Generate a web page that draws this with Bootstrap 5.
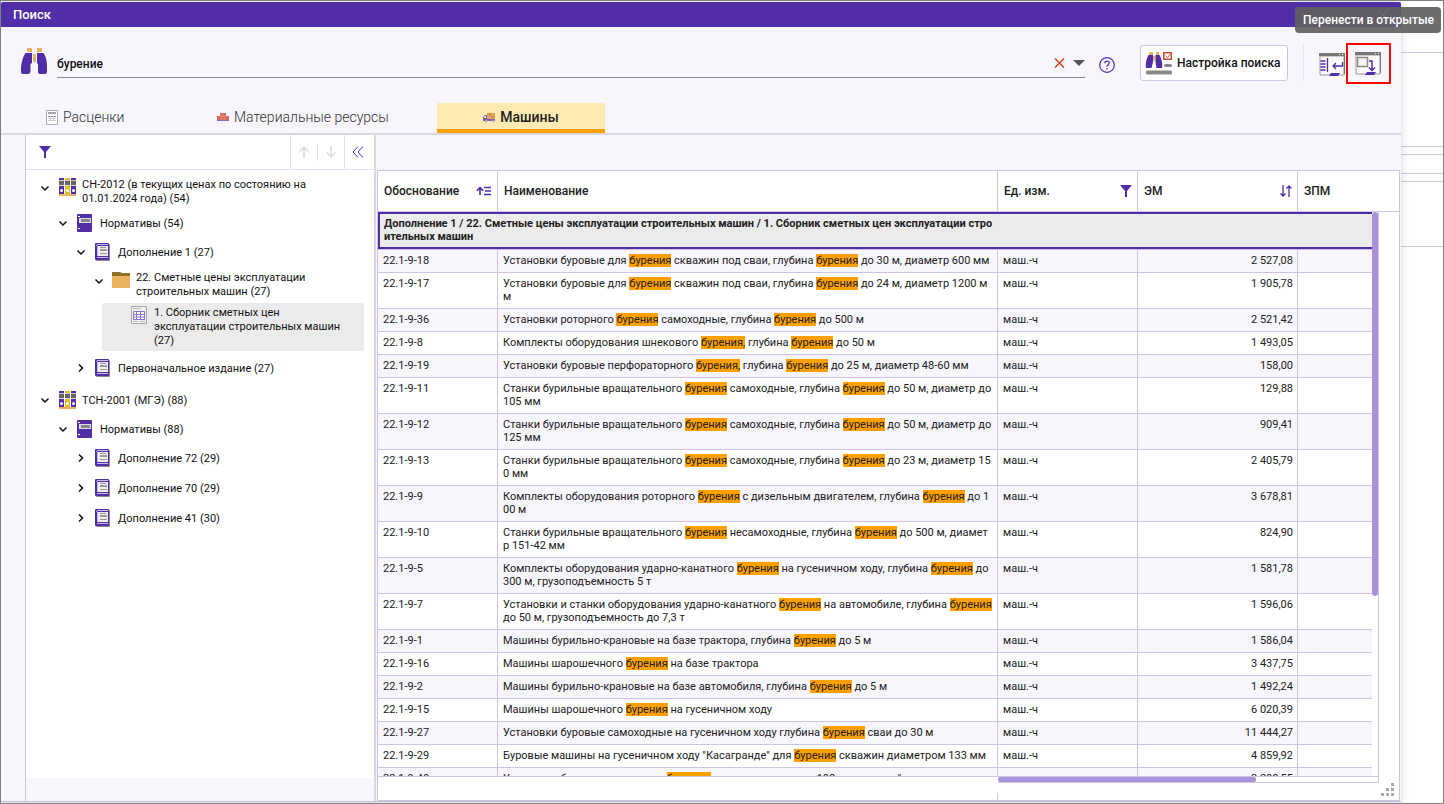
<!DOCTYPE html>
<html lang="ru">
<head>
<meta charset="utf-8">
<meta name="viewport" content="width=device-width, initial-scale=1">
<title>Поиск</title>
<link href="https://cdn.jsdelivr.net/npm/bootstrap@5.3.0/dist/css/bootstrap.min.css" rel="stylesheet">
<style>
:root{--violet:#512da8;--line:#cfc3e8;--tint:#f8f6fd;--mid:#a893d6;--orange:#ffa000}
body{font-family:Roboto,"Liberation Sans",sans-serif;font-size:11px;line-height:13px;color:#212121;background:#fff}
svg{display:block;flex:none}
button{line-height:1}
.screen{height:100vh;border:1px solid #808080;overflow:hidden}
.dialog-win{background:var(--tint);margin-top:1px;margin-bottom:1px;border-bottom:1px solid #c4bfce;border-radius:2px 2px 0 0;box-shadow:0 0 8px rgba(0,0,0,.18);z-index:1;min-width:0}
.title-bar{height:25px;background:var(--violet);color:#fff;padding:0 12px;border-radius:2px 2px 0 0}
.title-bar h1{font-size:13px;line-height:16px;font-weight:500}
.search-bar{height:76px;padding:10px 10px 0 20px}
.search-box{height:33px;border-bottom:1px solid #8e8b98}
.search-box input{font-size:12px;font-weight:500;line-height:16px;color:#111;background:none;outline:0;padding:2px 0 0}
.plain-btn{background:none;border:0;padding:0}
.setup-btn{height:36px;width:148px;background:#fff;border:1px solid var(--line);border-radius:3px;font-size:12px;font-weight:500;color:#111;padding:0 4px;margin-left:25px}
.help-btn{margin-left:14px}
.vr-line{width:1px;background:#e6e0f3}
.tall-line{height:36px;margin:8px 15px 0}
.hot{border:2px solid #f00;width:45px;height:41px;margin-top:6px}
.tab-row{border-bottom:2px solid #dad6e0;height:32px}
.tab-item{height:30px;font-size:14px;line-height:18px;font-weight:300;color:#333;border-bottom:4px solid transparent;padding-top:2px}
.tab-item.active{background:#ffebb2;border-bottom-color:var(--orange);font-weight:500;color:#212121;width:168px}
.tab-a{width:200px;padding-left:45px}
.tab-b{width:236px;padding-left:16px}
.shrinkable{min-height:0;min-width:0}
.side{width:349px;margin-left:24px;border-left:1px solid var(--line)}
.side-tools{height:35px;border-bottom:1px solid #e6e0f3;background:#fff;padding-left:13px}
.side-foot{height:23px}
.splitter{width:2px;background:#dad8e0;margin-right:1px}
.tree{font-size:11px;line-height:14px;color:#111;list-style:none;margin:0;padding:0;background:#fff}
.tree li{display:flex;align-items:center;gap:6px;padding-left:14px;height:29px}
.tree li>svg{margin-bottom:2px}
.tree .chev{margin-right:2px}
.tree .tall{height:30px}
.tree .two{height:39px;align-items:flex-start;padding-top:8px}
.tree .two-b{height:34px;align-items:flex-start;padding-top:4px}
.tree .two .chev,.tree .two-b .chev{margin-top:5px}
.tree .gap-top{margin-top:2px}
.tree .l2{padding-left:32px}
.tree .l3{padding-left:50px}
.tree .l4{padding-left:68px}
.tree .picked{height:48px;align-items:flex-start;margin:2px 10px 3px 76px;padding:3px 0 0 28px;background:#ebebeb;border-radius:2px}
.work{padding-top:35px;margin-right:1px}
.grid-pane{border:1px solid var(--line);background:#fff;min-width:0}
.grid-table{table-layout:fixed;width:100%;border-collapse:separate;border-spacing:0}
.c1{width:120px}.c2{width:500px}.c3{width:140px}.c4{width:160px}
.grid-table th{height:41px;font-size:12px;line-height:14px;font-weight:500;padding:0 5px 0 6px;border-right:1px solid var(--line);border-bottom:1px solid var(--line);vertical-align:middle}
.grid-table th:last-child{border-right:0}
.grid-table td{white-space:nowrap;padding:4px 5px 5px;vertical-align:top;border-right:1px solid var(--line);border-bottom:1px solid var(--line)}
.grid-table td:last-child{border-right:0}
.grid-table td:nth-child(4){text-align:right;padding-right:4px}
.grid-table tr:nth-child(even) td{background:var(--tint)}
.grid-table .group-row td{height:38px;padding:0;border-right:0;background:#fff}
.group-box{height:37px;background:#ebebeb;border:2px solid var(--violet);border-right:0;padding:3px 4px;font-weight:700}
.hit{background:var(--orange);color:inherit;padding:0}
.v-track{width:7px;border-right:1px solid var(--line)}
.v-thumb{height:68%;background:var(--mid);border-radius:3px}
.pad-right{width:20px}
.h-row{height:24px}
.h-left{width:620px;border-top:1px solid var(--line)}
.h-track{height:7px;border:1px solid var(--line);border-left:0;margin-right:20px}
.h-thumb{width:68%;height:5px;background:var(--mid);border-radius:2px}
.h-tick{width:1px;height:7px;background:var(--line);margin-left:-1px}
.behind{width:42px}
.behind div{border-bottom:1px solid var(--line)}
.tip{position:absolute;right:2px;top:6px;background:rgba(97,97,97,.92);color:#fff;font-size:12px;font-weight:500;line-height:16px;padding:5px 7px 5px 8px;border-radius:4px;z-index:3}
.grip{position:absolute;right:48px;bottom:7px;z-index:2}
</style>
</head>
<body>
<svg width="0" height="0" class="position-absolute" aria-hidden="true">
<defs>
<symbol id="down" viewBox="0 0 10 10"><path d="M1.500 3.500 5 7l3.500-3.500" fill="none" stroke="#111" stroke-width="1.500"/></symbol>
<symbol id="right" viewBox="0 0 10 10"><path d="M3 1.500 6.500 5 3 8.500" fill="none" stroke="#111" stroke-width="1.500"/></symbol>
<symbol id="funnel" viewBox="0 0 12 12"><path d="M0 0h12L7 6v6H5V6z" fill="#512da8"/></symbol>
<symbol id="binders" viewBox="0 0 18 18"><path d="M1 0h5v16H1zM13 0h5v16h-5z" fill="#512da8"/><path d="M7 0h5v16H7z" fill="#e8bd1c"/><path d="M1 3h5v4H1zM7 3h5v4H7zM13 3h5v4h-5z" fill="#666"/><path d="M1 2h5v1H1zM7 2h5v1H7zM13 2h5v1h-5z" fill="#ccc"/><path d="M1 7h5v1H1zM13 7h5v1h-5zM7 7h5v1H7z" fill="#ddd"/><g fill="#fff"><circle cx="3.500" cy="12.500" r="1.500"/><circle cx="9.500" cy="12.500" r="1.500"/><circle cx="15.500" cy="12.500" r="1.500"/></g><path d="M1 16h17v2H1z" fill="#e9b45f"/></symbol>
<symbol id="box" viewBox="0 0 18 18"><rect x="1" width="15" height="18" rx="1" fill="#512da8"/><path d="M3 4h12v5H3z" fill="#ddd"/><path d="M5 5h9v3H5z" fill="#888"/><path d="M2 2h2v1H2zM2 14h2v1H2z" fill="#fff"/></symbol>
<symbol id="book" viewBox="0 0 18 18"><rect x="2" y="1" width="14" height="17" rx="1" fill="#8b8794"/><rect x="1" width="14" height="17" rx="1" fill="#512da8"/><path d="M4 3h10v10H4z" fill="#eee"/><path d="M3 1h11v1H3zM2 2h1v1H2zM3 14h11v1H3zM3 3h1v10H3z" fill="#c9bce8"/><path d="M6 4h6v1H6zM6 6h7v2H6zM6 10h7v1H6z" fill="#999"/></symbol>
<symbol id="folder" viewBox="0 0 18 18"><path d="M0 1h8l2 1h8v3H0z" fill="#92702a"/><path d="M0 5h18v12H0z" fill="#e9b45f"/></symbol>
<symbol id="sheet" viewBox="0 0 18 18"><path d="M1.500.500h15v17h-15z" fill="#eee" stroke="#aaa"/><path d="M3 2h8v1H3zM4 15h4v1H4zM10 15h5v1h-5z" fill="#bbb"/><path d="M3.500 5.500h11v8h-11zM3.500 8.500h11M3.500 11h11M6.500 5.500v8M10.500 5.500v8" fill="#fff" stroke="#8a75c6"/></symbol>
</defs>
</svg>
<div class="screen position-relative d-flex">
<main class="dialog-win flex-grow-1 d-flex flex-column position-relative">
<header class="title-bar d-flex flex-shrink-0 align-items-center justify-content-between"><h1 class="m-0">Поиск</h1><button class="plain-btn" aria-label="Закрыть"><svg width="12" height="12" viewBox="0 0 12 12"><path d="M0 0l12 12M12 0 0 12" stroke="#fff"/></svg></button></header>
<form class="search-bar d-flex flex-shrink-0 align-items-start" onsubmit="return false">
<svg class="mt-2 me-2" width="28" height="30" viewBox="0 0 28 30"><path d="M6 3h5v4H6zM16 3h5v4h-5zM12 9h3v8h-3z" fill="#e9b45f"/><path d="M4.500 8H11V18L9.500 19V27L8 29H2Q0 29 0 27V22Q1 13 4.500 8zM16 8H22.500Q26 13 26 22V27Q26 29 24 29H18L17 27V19L16 18z" fill="#512da8"/></svg>
<div class="search-box flex-grow-1 d-flex align-items-center mt-2 pt-1">
<input class="border-0 flex-grow-1" type="text" value="бурение" aria-label="Поиск">
<button class="plain-btn me-2" aria-label="Очистить"><svg width="11" height="10" viewBox="0 0 11 10"><path d="M1 .5l9 9M10 .5l-9 9" stroke="#d1451f" stroke-width="1.500"/></svg></button>
<button class="plain-btn" aria-label="История"><svg width="12" height="6" viewBox="0 0 12 6"><path d="M0 0h12L6 6z" fill="#555"/></svg></button>
</div>
<button class="plain-btn help-btn mt-3 pt-1" aria-label="Справка"><svg width="16" height="16" viewBox="0 0 16 16"><circle cx="8" cy="8" r="7.300" fill="none" stroke="#512da8" stroke-width="1.200"/><path d="M5.800 6.300c0-3 4.500-2.900 4.500-.2C10.300 7.800 8 7.900 8 9.800M8 11v1.500" fill="none" stroke="#512da8" stroke-width="1.200"/></svg></button>
<button class="setup-btn d-flex flex-shrink-0 align-items-center gap-1 mt-2"><svg width="28" height="24" viewBox="0 0 28 24"><path d="M4 1h4v3H4zM11 1h3v3h-3zM8 5h2v5H8z" fill="#e9b45f"/><path d="M3.500 4H8v7L6.500 17H1Q0 10 3.500 4zM10.500 4H14.500Q18 10 17 17H11.500L10.500 11z" fill="#512da8"/><path d="M18.800 1.800h7.500v6.500h-7.500z" fill="#fff" stroke="#cf4a35" stroke-width="1.500"/><path d="M20.500 4.500l2 2 3-3.500" fill="none" stroke="#cf4a35"/><rect x="19" y="13" width="8" height="3" rx="1.500" fill="#888"/><rect x="1" y="19.500" width="26" height="4" rx="1.500" fill="#888"/></svg><span class="text-nowrap">Настройка поиска</span></button>
<span class="vr-line tall-line"></span>
<button class="plain-btn mt-3" aria-label="Вставить"><svg width="27" height="24" viewBox="0 0 27 24"><path d="M1 3h24v19H1z" fill="#fafafa" stroke="#999" stroke-width="1"/><path d="M0 0h26v3H0zM25 3h1v18h-1z" fill="#777"/><path d="M20 1h1v1h-1zM23 1h1v1h-1z" fill="#fff"/><path d="M1.500 8h5M1.500 11h5M1.500 14h5M1.500 17h5M8.500 5v14M23.500 9v4H14M17 10l-3 3 3 3" fill="none" stroke="#512da8" stroke-width="1.300"/><path d="M12 20h9l-2 3h-9z" fill="#512da8"/></svg></button>
<button class="plain-btn hot d-flex align-items-center justify-content-center" aria-label="Перенести в открытые"><svg width="27" height="24" viewBox="0 0 27 24"><path d="M1 3h24v19H1z" fill="#fafafa" stroke="#999" stroke-width="1"/><path d="M0 0h26v3H0zM25 3h1v18h-1z" fill="#777"/><path d="M20 1h1v1h-1zM23 1h1v1h-1z" fill="#fff"/><path d="M2.500 5.500h10v9h-10z" fill="#f4f4f4" stroke="#888" stroke-width="1.500"/><path d="M14 9h3v9M14 15.500l3 3 3-3" fill="none" stroke="#512da8" stroke-width="1.500"/><path d="M12 20h9l-2 3h-9z" fill="#512da8"/></svg></button>
</form>
<nav class="tab-row d-flex flex-shrink-0">
<a href="#" class="tab-item tab-a d-flex align-items-center text-decoration-none gap-1"><svg width="13" height="15" viewBox="0 0 13 15"><path d="M.5.500h11v14H.500z" fill="#fff" stroke="#aaa"/><path d="M2 2h8v2H2z" fill="#aaa"/><path d="M2 6.500h8" stroke="#8f7cc6"/><path d="M2 8.500h8M2 10.500h8M4.500 6v5M7.500 6v5" stroke="#ccc" fill="none"/></svg>Расценки</a>
<a href="#" class="tab-item tab-b d-flex align-items-center text-decoration-none gap-1"><svg width="13" height="8" viewBox="0 0 13 8"><path d="M3 0h6v3h3v4H0V3h3z" fill="#dc6a58"/><path d="M0 7h12v1H0z" fill="#8b6aae"/><path d="M3 3.500h6M6 0v3.500M4 3.500V7M8 3.500V7" stroke="#eba79b" stroke-width=".5"/></svg>Материальные ресурсы</a>
<a href="#" class="tab-item active d-flex align-items-center justify-content-center text-decoration-none gap-1"><svg width="13" height="11" viewBox="0 0 13 11"><path d="M4 1h8v7H4z" fill="#e3a35a"/><path d="M6 1h2v3H6zM9 4h2v2H9z" fill="#c98a52"/><path d="M0 9V5l2-2h2v4h8v2z" fill="#7c5cb5"/><path d="M1 5l1-1h1v2H1z" fill="#fff"/><circle cx="3" cy="9" r="1.300" fill="#aaa"/><circle cx="10" cy="9" r="1.300" fill="#aaa"/></svg>Машины</a>
</nav>
<div class="d-flex flex-grow-1 shrinkable">
<aside class="side d-flex flex-column flex-shrink-0">
<div class="side-tools d-flex align-items-center"><button class="plain-btn me-auto" aria-label="Фильтр"><svg width="12" height="12"><use href="#funnel"/></svg></button>
<span class="vr-line h-100"></span><button class="plain-btn px-2" disabled aria-label="Вверх"><svg width="10" height="12" viewBox="0 0 10 12"><path d="M5 12V1M.8 5.500 5 1.200l4.200 4.300" fill="none" stroke="#ddd" stroke-width="1.700"/></svg></button><span class="vr-line h-50"></span><button class="plain-btn px-2" disabled aria-label="Вниз"><svg width="10" height="12" viewBox="0 0 10 12"><path d="M5 0v11M.8 6.500 5 10.800l4.200-4.300" fill="none" stroke="#ddd" stroke-width="1.700"/></svg></button><span class="vr-line h-100"></span><button class="plain-btn px-2" aria-label="Свернуть"><svg width="13" height="12" viewBox="0 0 13 12"><path d="M5 .5 0 6l5 5.500M10 .5 5 6l5 5.500" fill="none" stroke="#512da8"/></svg></button></div>
<ul class="tree flex-grow-1">
<li class="two"><svg class="chev" width="10" height="10"><use href="#down"/></svg><svg width="18" height="18"><use href="#binders"/></svg><span>СН-2012 (в текущих ценах по состоянию на<br>01.01.2024 года) (54)</span></li>
<li class="l2"><svg class="chev" width="10" height="10"><use href="#down"/></svg><svg width="18" height="18"><use href="#box"/></svg>Нормативы (54)</li>
<li class="l3"><svg class="chev" width="10" height="10"><use href="#down"/></svg><svg width="18" height="18"><use href="#book"/></svg>Дополнение 1 (27)</li>
<li class="l4 two-b"><svg class="chev" width="10" height="10"><use href="#down"/></svg><svg width="18" height="18"><use href="#folder"/></svg><span>22. Сметные цены эксплуатации<br>строительных машин (27)</span></li>
<li class="picked"><svg width="18" height="18"><use href="#sheet"/></svg><span>1. Сборник сметных цен<br>эксплуатации строительных машин<br>(27)</span></li>
<li class="l3 tall"><svg class="chev" width="10" height="10"><use href="#right"/></svg><svg width="18" height="18"><use href="#book"/></svg>Первоначальное издание (27)</li>
<li class="gap-top"><svg class="chev" width="10" height="10"><use href="#down"/></svg><svg width="18" height="18"><use href="#binders"/></svg>ТСН-2001 (МГЭ) (88)</li>
<li class="l2"><svg class="chev" width="10" height="10"><use href="#down"/></svg><svg width="18" height="18"><use href="#box"/></svg>Нормативы (88)</li>
<li class="l3 tall"><svg class="chev" width="10" height="10"><use href="#right"/></svg><svg width="18" height="18"><use href="#book"/></svg>Дополнение 72 (29)</li>
<li class="l3 tall"><svg class="chev" width="10" height="10"><use href="#right"/></svg><svg width="18" height="18"><use href="#book"/></svg>Дополнение 70 (29)</li>
<li class="l3 tall"><svg class="chev" width="10" height="10"><use href="#right"/></svg><svg width="18" height="18"><use href="#book"/></svg>Дополнение 41 (30)</li>
</ul>
<div class="side-foot"></div>
</aside>
<div class="splitter flex-shrink-0"></div>
<section class="work flex-grow-1 d-flex flex-column shrinkable">
<div class="grid-pane flex-grow-1 d-flex flex-column shrinkable">
<table class="grid-table"><colgroup><col class="c1"><col class="c2"><col class="c3"><col class="c4"><col></colgroup>
<thead><tr><th><div class="d-flex justify-content-between align-items-center">Обоснование<svg width="16" height="10" viewBox="0 0 16 10"><path d="M4 9V1.500M.8 4.800 4 1.600l3.200 3.200M8 1.500h7M9 5h6M8 8.500h7" fill="none" stroke="#512da8" stroke-width="1.600"/></svg></div></th><th>Наименование</th><th><div class="d-flex justify-content-between align-items-center">Ед. изм.<svg width="12" height="12"><use href="#funnel"/></svg></div></th><th><div class="d-flex justify-content-between align-items-center">ЭМ<svg width="12" height="12" viewBox="0 0 12 12"><path d="M3 0v11M.5 8.500 3 11l2.500-2.500M9 12V1M6.500 3.500 9 1l2.500 2.500" fill="none" stroke="#512da8" stroke-width="1.300"/></svg></div></th><th>ЗПМ</th></tr></thead></table>
<div class="d-flex flex-grow-1 shrinkable">
<div class="flex-grow-1 overflow-hidden">
<table class="grid-table"><colgroup><col class="c1"><col class="c2"><col class="c3"><col class="c4"><col></colgroup>
<tbody>
<tr class="group-row"><td colspan="5"><div class="group-box">Дополнение 1 / 22. Сметные цены эксплуатации строительных машин / 1. Сборник сметных цен эксплуатации стро<br>ительных машин</div></td></tr>
<tr><td>22.1-9-18</td><td>Установки буровые для <mark class="hit">бурения</mark> скважин под сваи, глубина <mark class="hit">бурения</mark> до 30 м, диаметр 600 мм</td><td>маш.-ч</td><td>2 527,08</td><td></td></tr>
<tr><td>22.1-9-17</td><td>Установки буровые для <mark class="hit">бурения</mark> скважин под сваи, глубина <mark class="hit">бурения</mark> до 24 м, диаметр 1200 м<br>м</td><td>маш.-ч</td><td>1 905,78</td><td></td></tr>
<tr><td>22.1-9-36</td><td>Установки роторного <mark class="hit">бурения</mark> самоходные, глубина <mark class="hit">бурения</mark> до 500 м</td><td>маш.-ч</td><td>2 521,42</td><td></td></tr>
<tr><td>22.1-9-8</td><td>Комплекты оборудования шнекового <mark class="hit">бурения,</mark> глубина <mark class="hit">бурения</mark> до 50 м</td><td>маш.-ч</td><td>1 493,05</td><td></td></tr>
<tr><td>22.1-9-19</td><td>Установки буровые перфораторного <mark class="hit">бурения,</mark> глубина <mark class="hit">бурения</mark> до 25 м, диаметр 48-60 мм</td><td>маш.-ч</td><td>158,00</td><td></td></tr>
<tr><td>22.1-9-11</td><td>Станки бурильные вращательного <mark class="hit">бурения</mark> самоходные, глубина <mark class="hit">бурения</mark> до 50 м, диаметр до<br>105 мм</td><td>маш.-ч</td><td>129,88</td><td></td></tr>
<tr><td>22.1-9-12</td><td>Станки бурильные вращательного <mark class="hit">бурения</mark> самоходные, глубина <mark class="hit">бурения</mark> до 50 м, диаметр до<br>125 мм</td><td>маш.-ч</td><td>909,41</td><td></td></tr>
<tr><td>22.1-9-13</td><td>Станки бурильные вращательного <mark class="hit">бурения</mark> самоходные, глубина <mark class="hit">бурения</mark> до 23 м, диаметр 15<br>0 мм</td><td>маш.-ч</td><td>2 405,79</td><td></td></tr>
<tr><td>22.1-9-9</td><td>Комплекты оборудования роторного <mark class="hit">бурения</mark> с дизельным двигателем, глубина <mark class="hit">бурения</mark> до 1<br>00 м</td><td>маш.-ч</td><td>3 678,81</td><td></td></tr>
<tr><td>22.1-9-10</td><td>Станки бурильные вращательного <mark class="hit">бурения</mark> несамоходные, глубина <mark class="hit">бурения</mark> до 500 м, диамет<br>р 151-42 мм</td><td>маш.-ч</td><td>824,90</td><td></td></tr>
<tr><td>22.1-9-5</td><td>Комплекты оборудования ударно-канатного <mark class="hit">бурения</mark> на гусеничном ходу, глубина <mark class="hit">бурения</mark> до<br>300 м, грузоподъемность 5 т</td><td>маш.-ч</td><td>1 581,78</td><td></td></tr>
<tr><td>22.1-9-7</td><td>Установки и станки оборудования ударно-канатного <mark class="hit">бурения</mark> на автомобиле, глубина <mark class="hit">бурения</mark><br>до 50 м, грузоподъемность до 7,3 т</td><td>маш.-ч</td><td>1 596,06</td><td></td></tr>
<tr><td>22.1-9-1</td><td>Машины бурильно-крановые на базе трактора, глубина <mark class="hit">бурения</mark> до 5 м</td><td>маш.-ч</td><td>1 586,04</td><td></td></tr>
<tr><td>22.1-9-16</td><td>Машины шарошечного <mark class="hit">бурения</mark> на базе трактора</td><td>маш.-ч</td><td>3 437,75</td><td></td></tr>
<tr><td>22.1-9-2</td><td>Машины бурильно-крановые на базе автомобиля, глубина <mark class="hit">бурения</mark> до 5 м</td><td>маш.-ч</td><td>1 492,24</td><td></td></tr>
<tr><td>22.1-9-15</td><td>Машины шарошечного <mark class="hit">бурения</mark> на гусеничном ходу</td><td>маш.-ч</td><td>6 020,39</td><td></td></tr>
<tr><td>22.1-9-27</td><td>Установки буровые самоходные на гусеничном ходу глубина <mark class="hit">бурения</mark> сваи до 30 м</td><td>маш.-ч</td><td>11 444,27</td><td></td></tr>
<tr><td>22.1-9-29</td><td>Буровые машины на гусеничном ходу "Касагранде" для <mark class="hit">бурения</mark> скважин диаметром 133 мм</td><td>маш.-ч</td><td>4 859,92</td><td></td></tr>
<tr><td>22.1-9-40</td><td>Установки буровые шнекового <mark class="hit">бурения,</mark> мощность машины 100 кг, навесной</td><td>маш.-ч</td><td>2 200,55</td><td></td></tr>
</tbody></table>
</div>
<div class="v-track flex-shrink-0"><div class="v-thumb"></div></div><div class="pad-right flex-shrink-0"></div>
</div>
<div class="h-row d-flex flex-shrink-0"><div class="h-left flex-shrink-0"></div><div class="flex-grow-1 d-flex flex-column justify-content-between"><div class="h-track"><div class="h-thumb"></div></div><div class="h-tick"></div></div></div>
</div>
</section>
</div>
</main>
<div class="behind flex-shrink-0" aria-hidden="true"><div style="height:52px"></div><div style="height:94px"></div><div style="height:8px"></div><div style="height:19px"></div><div style="height:8px"></div><div style="height:65px"></div></div>
<div class="tip" role="tooltip">Перенести в открытые</div>
<svg class="grip" width="14" height="13" viewBox="0 0 14 13" fill="#aaa"><path d="M10 0h3v3h-3zM5 5h3v3H5zM10 5h3v3h-3zM0 10h3v3H0zM5 10h3v3H5zM10 10h3v3h-3z"/></svg>
</div>
<script src="https://cdn.jsdelivr.net/npm/bootstrap@5.3.0/dist/js/bootstrap.bundle.min.js"></script>
</body>
</html>
